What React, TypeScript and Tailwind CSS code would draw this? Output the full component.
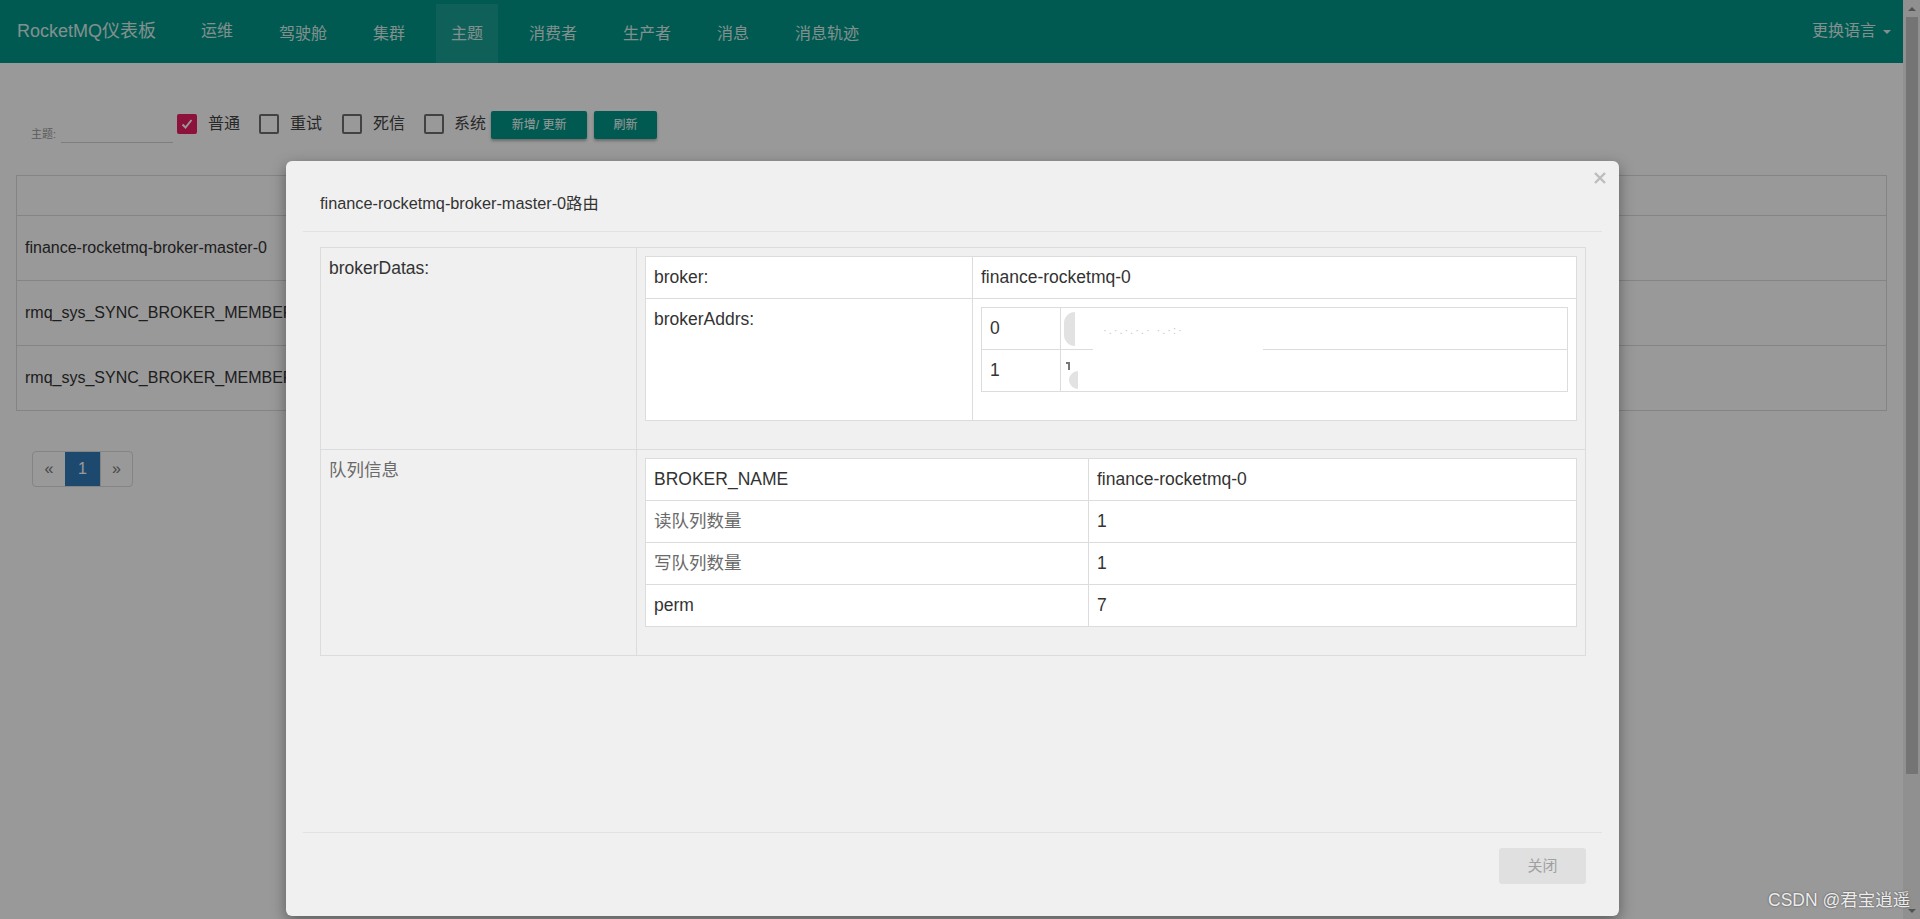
import React from "react";

const navItems = ["运维", "驾驶舱", "集群", "主题", "消费者", "生产者", "消息", "消息轨迹"];

function Box({ checked, className }: { checked?: boolean; className?: string }) {
  return checked ? (
    <div className={`flex h-[20px] w-[20px] items-center justify-center rounded-[2px] bg-[#e91e63] ${className ?? ""}`}>
      <svg width="14" height="14" viewBox="0 0 14 14">
        <polyline points="2.5,7.5 5.5,10.5 11.5,3" fill="none" stroke="#ffffff" strokeWidth="2" />
      </svg>
    </div>
  ) : (
    <div className={`h-[20px] w-[20px] rounded-[2px] border-2 border-[#6f6f6f] ${className ?? ""}`} />
  );
}

export default function App() {
  return (
    <div className="relative h-[919px] w-[1920px] overflow-hidden bg-white font-['Liberation_Sans','Noto_Sans_CJK_SC',sans-serif] text-[#333]">
      <div className="flex h-full">
        <div className="flex min-w-0 flex-1 flex-col">
          {/* navbar */}
          <nav className="flex h-[63px] shrink-0 bg-[#009688] text-[#dcefec]">
            <div className="flex w-[186px] items-center pl-[17px] text-[18px] leading-[25px]">RocketMQ仪表板</div>
            <ul className="mt-[4px] flex h-[59px] gap-[16px]">
              {navItems.map((item) => (
                <li
                  key={item}
                  className={`flex items-center px-[15px] text-[16px] leading-[22px] ${item === "主题" ? "bg-white/10" : ""}`}
                >
                  <span className={item === "运维" ? "-mt-[5px]" : ""}>{item}</span>
                </li>
              ))}
            </ul>
            <div className="ml-auto flex items-center pr-[12px] text-[16px] leading-[22px]">
              <span className="-mt-[2px]">更换语言</span>
              <span className="ml-[7px] h-0 w-0 border-x-[4px] border-t-[4px] border-x-transparent border-t-[#dcefec]" />
            </div>
          </nav>

          {/* content */}
          <div className="px-[16px]">
            <div className="mt-[48px] flex h-[32px] items-start">
              <div className="flex h-[32px] items-end pl-[15px]">
                <span className="mb-[2px] text-[11px] leading-[14px] text-[#9a9a9a]">主题:</span>
                <div className="ml-[5px] h-[32px] w-[112px] border-b border-[#d2d2d2]" />
              </div>
              <div className="ml-[4px] mt-[2px] flex items-center">
                <Box checked />
                <span className="ml-[11px] text-[16px] leading-[22px] text-[#444]">普通</span>
              </div>
              <div className="ml-[19px] mt-[2px] flex items-center">
                <Box />
                <span className="ml-[11px] text-[16px] leading-[22px] text-[#444]">重试</span>
              </div>
              <div className="ml-[20px] mt-[2px] flex items-center">
                <Box />
                <span className="ml-[11px] text-[16px] leading-[22px] text-[#444]">死信</span>
              </div>
              <div className="ml-[19px] mt-[2px] flex items-center">
                <Box />
                <span className="ml-[10px] text-[16px] leading-[22px] text-[#444]">系统</span>
              </div>
              <button className="ml-[5px] h-[28px] w-[96px] rounded-[2px] bg-[#009688] text-[12px] text-white shadow-[0_2px_3px_rgba(0,0,0,0.3)]">
                新增/ 更新
              </button>
              <button className="ml-[7px] h-[28px] w-[63px] rounded-[2px] bg-[#009688] text-[12px] text-white shadow-[0_2px_3px_rgba(0,0,0,0.3)]">
                刷新
              </button>
            </div>

            <div className="mt-[32px] border border-[#dcdcdc] text-[16px] leading-[22px] text-[#333]">
              <div className="h-[40px] border-b border-[#dcdcdc]" />
              <div className="flex h-[65px] items-center border-b border-[#dcdcdc] px-[8px]">finance-rocketmq-broker-master-0</div>
              <div className="flex h-[65px] items-center border-b border-[#dcdcdc] px-[8px]">rmq_sys_SYNC_BROKER_MEMBER_finance-rocketmq-0</div>
              <div className="flex h-[64px] items-center px-[8px]">rmq_sys_SYNC_BROKER_MEMBER_finance-rocketmq-1</div>
            </div>

            <div className="ml-[16px] mt-[40px] flex h-[36px] w-fit overflow-hidden rounded-[4px] border border-[#dcdcdc] text-[16px]">
              <div className="flex w-[32px] items-center justify-center text-[#777]">«</div>
              <div className="flex w-[35px] items-center justify-center bg-[#337ab7] text-white">1</div>
              <div className="flex w-[32px] items-center justify-center border-l border-[#dcdcdc] text-[#777]">»</div>
            </div>
          </div>
        </div>

        {/* scrollbar */}
        <div className="flex w-[17px] shrink-0 flex-col bg-[#f1f1f1]">
          <div className="flex h-[17px] items-center justify-center">
            <span className="h-0 w-0 border-x-[4px] border-b-[4px] border-x-transparent border-b-[#8a8a8a]" />
          </div>
          <div className="ml-[3px] mr-[2px] h-[757px] bg-[#c1c1c1]" />
          <div className="flex-1" />
          <div className="flex h-[17px] items-center justify-center">
            <span className="h-0 w-0 border-x-[4px] border-t-[4px] border-x-transparent border-t-[#8a8a8a]" />
          </div>
        </div>
      </div>

      {/* backdrop */}
      <div className="absolute inset-0 bg-black/40" />

      {/* modal */}
      <div className="absolute left-[286px] top-[161px] flex h-[755px] w-[1333px] flex-col rounded-[6px] bg-[#f0f0f0] px-[17px] shadow-[0_5px_15px_rgba(0,0,0,0.4)]">
        <button className="absolute right-[12px] top-[10px] flex h-[14px] w-[14px] items-center justify-center">
          <svg width="12" height="12" viewBox="0 0 12 12">
            <path d="M1 1 L11 11 M11 1 L1 11" stroke="#bdbdbd" strokeWidth="2.4" />
          </svg>
        </button>

        <div className="h-[71px] shrink-0 border-b border-[#e2e2e2] px-[17px] pt-[31px] text-[16.3px] leading-[23px] text-[#333]">
          finance-rocketmq-broker-master-0路由
        </div>

        <div className="flex-1 pl-[17px] pr-[16px] pt-[15px]">
          <table className="w-full table-fixed border-collapse text-[17.5px] leading-[25px] text-[#333]">
            <colgroup>
              <col className="w-[316px]" />
              <col />
            </colgroup>
            <tbody>
              <tr>
                <td className="border border-[#dcdcdc] p-[8px] align-top">brokerDatas:</td>
                <td className="border border-[#dcdcdc] p-[8px] align-top">
                  <table className="mb-[20px] w-full table-fixed border-collapse bg-white">
                    <colgroup>
                      <col className="w-[327px]" />
                      <col />
                    </colgroup>
                    <tbody>
                      <tr>
                        <td className="border border-[#dcdcdc] p-[8px] align-top">broker:</td>
                        <td className="border border-[#dcdcdc] p-[8px] align-top">finance-rocketmq-0</td>
                      </tr>
                      <tr>
                        <td className="border border-[#dcdcdc] p-[8px] align-top">brokerAddrs:</td>
                        <td className="border border-[#dcdcdc] p-[8px] align-top">
                          <div className="relative mb-[20px]">
                            <table className="w-full table-fixed border-collapse bg-white">
                              <colgroup>
                                <col className="w-[79px]" />
                                <col />
                              </colgroup>
                              <tbody>
                                <tr>
                                  <td className="border border-[#dcdcdc] p-[8px] align-top">0</td>
                                  <td className="relative border border-[#dcdcdc] p-[8px] align-top">
                                    <div className="absolute left-[3px] top-[4px] h-[34px] w-[11px] rounded-l-full bg-[#e2e2e2]" />
                                    <div className="absolute left-[42px] top-[16px] text-[11px] leading-[12px] tracking-[2px] text-[#c4c4c4]">·.·.·.·.· ·.·:·</div>
                                    &nbsp;
                                  </td>
                                </tr>
                                <tr>
                                  <td className="border border-[#dcdcdc] p-[8px] align-top">1</td>
                                  <td className="relative border border-[#dcdcdc] p-[8px] align-top">
                                    <div className="absolute left-[7px] top-[12px] h-[8px] w-[2px] bg-[#777]" />
                                    <div className="absolute left-[5px] top-[12px] h-[2px] w-[3px] bg-[#777]" />
                                    <div className="absolute left-[8px] top-[21px] h-[18px] w-[9px] rounded-l-full bg-[#e2e2e2]" />
                                    &nbsp;
                                  </td>
                                </tr>
                              </tbody>
                            </table>
                            <div className="absolute left-[112px] top-[39px] h-[6px] w-[170px] bg-white" />
                          </div>
                        </td>
                      </tr>
                    </tbody>
                  </table>
                </td>
              </tr>
              <tr>
                <td className="border border-[#dcdcdc] p-[8px] align-top text-[#6a6a6a]">队列信息</td>
                <td className="border border-[#dcdcdc] p-[8px] align-top">
                  <table className="mb-[20px] w-full table-fixed border-collapse bg-white">
                    <colgroup>
                      <col className="w-[443px]" />
                      <col />
                    </colgroup>
                    <tbody>
                      <tr>
                        <td className="border border-[#dcdcdc] p-[8px] align-top">BROKER_NAME</td>
                        <td className="border border-[#dcdcdc] p-[8px] align-top">finance-rocketmq-0</td>
                      </tr>
                      <tr>
                        <td className="border border-[#dcdcdc] p-[8px] align-top text-[#6a6a6a]">读队列数量</td>
                        <td className="border border-[#dcdcdc] p-[8px] align-top">1</td>
                      </tr>
                      <tr>
                        <td className="border border-[#dcdcdc] p-[8px] align-top text-[#6a6a6a]">写队列数量</td>
                        <td className="border border-[#dcdcdc] p-[8px] align-top">1</td>
                      </tr>
                      <tr>
                        <td className="border border-[#dcdcdc] p-[8px] align-top">perm</td>
                        <td className="border border-[#dcdcdc] p-[8px] align-top">7</td>
                      </tr>
                    </tbody>
                  </table>
                </td>
              </tr>
            </tbody>
          </table>
        </div>

        <div className="flex h-[84px] shrink-0 items-start justify-end border-t border-[#e2e2e2] pr-[16px] pt-[15px]">
          <button className="h-[36px] w-[87px] rounded-[3px] bg-[#e0e0e0] text-[15px] text-[#a0a0a0]">关闭</button>
        </div>
      </div>

      {/* watermark */}
      <div className="absolute left-[1768px] top-[889px] text-[17.5px] leading-[22px] text-[#ececec] [text-shadow:0_0_2px_rgba(0,0,0,0.55)]">
        CSDN @君宝逍遥
      </div>
    </div>
  );
}
